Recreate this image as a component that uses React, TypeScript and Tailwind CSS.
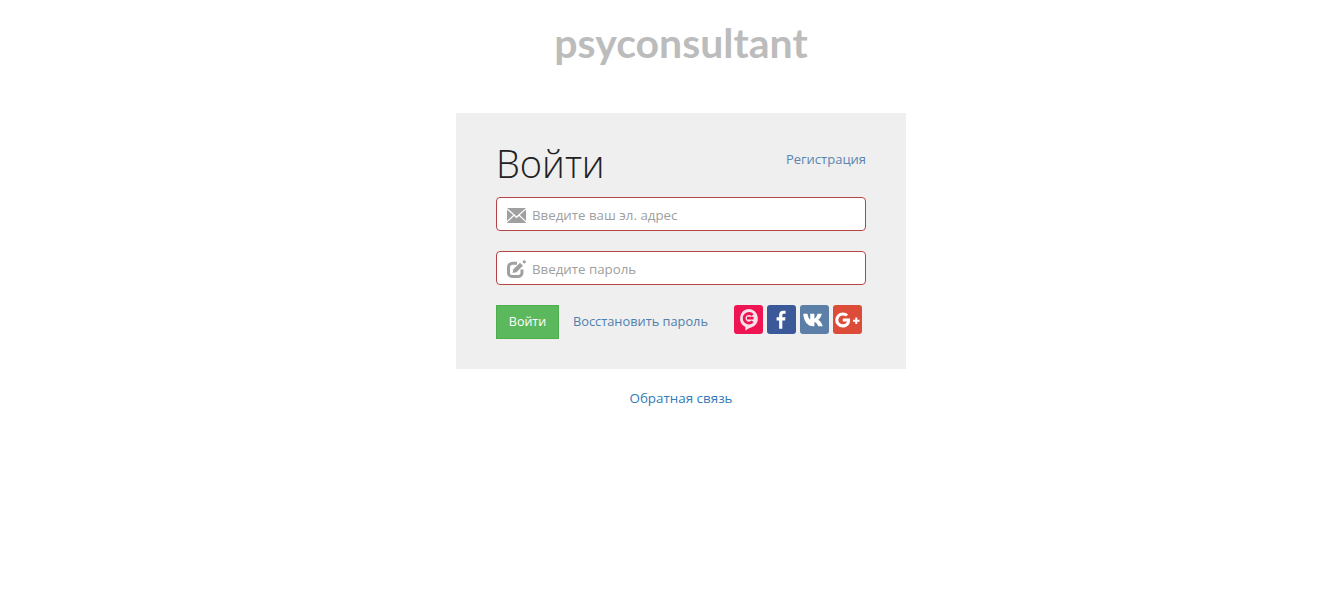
import React from 'react';

const MailIcon = () => (
  <svg width="19" height="15" viewBox="0 0 19 15" className="shrink-0">
    <path d="M0 0h19L9.5 8.200z" fill="#a0a0a0" />
    <path d="M0 1.500v11.500L6.200 7zM19 1.500v11.500L12.800 7z" fill="#a0a0a0" />
    <path d="M0 15v-.4L7 8l2.500 2.200L12 8l7 6.600v.4z" fill="#a0a0a0" />
  </svg>
);

const EditIcon = () => (
  <svg width="19" height="18" viewBox="0 0 19 18" className="shrink-0">
    <path d="M10 3.200H5.500a4 4 0 0 0-4 4v5.800a3.500 3.500 0 0 0 3.500 3.500h6a4 4 0 0 0 4-4V9.500" fill="none" stroke="#a0a0a0" strokeWidth="3" />
    <path d="M5.600 13l.8-3.700L13 2.800l3 2.900-6.600 6.600z" fill="#a0a0a0" />
    <circle cx="17.300" cy="1.800" r="1.600" fill="#a0a0a0" />
  </svg>
);

const Field = ({ icon, placeholder }: { icon: React.ReactNode; placeholder: string }) => (
  <div className="flex h-[34px] items-center rounded border border-[#b34444] bg-white pl-[10px]">
    <span className="flex w-[25px] shrink-0 items-center pt-[2px]">{icon}</span>
    <span className="pt-[1px] text-[13.3px] leading-[20px] text-[#a0a0a0]">{placeholder}</span>
  </div>
);

const Social = ({ bg, children }: { bg: string; children: React.ReactNode }) => (
  <a className={`flex h-[29px] w-[29px] items-center justify-center rounded-[3px] ${bg}`}>{children}</a>
);

const App: React.FC = () => {
  return (
    <div className="min-h-screen bg-white pl-5 font-['Open_Sans',sans-serif]">
      <div className="pt-[20px] text-center">
        <div className="font-['Lato',sans-serif] text-[41px] leading-[46px] font-bold text-[#bcbcbc]">psyconsultant</div>
      </div>

      <div className="mx-auto mt-[47px] w-[450px] bg-[#efefef] px-10 pt-[24px] pb-[30px]">
        <div className="flex h-[60px] items-start justify-between">
          <h1 className="text-[38px] leading-[52px] font-light text-[#222]">Войти</h1>
          <a className="mt-[12px] text-[13px] leading-[20px] text-[#5b84b1]">Регистрация</a>
        </div>

        <div className="flex flex-col gap-5">
          <Field icon={<MailIcon />} placeholder="Введите ваш эл. адрес" />
          <Field icon={<EditIcon />} placeholder="Введите пароль" />
        </div>

        <div className="mt-5 flex items-start">
          <button className="h-[34px] w-[63px] border border-[#4cae4c] bg-[#5cb85c] text-[12.5px] text-white">Войти</button>
          <a className="ml-[14px] self-center text-[12.8px] text-[#4f7fae]">Восстановить пароль</a>
          <div className="ml-auto mr-[4px] flex gap-1">
            <Social bg="bg-[#ef1553]">
              <svg width="21" height="23" viewBox="0 0 21 23">
                <path d="M10.500 1a9.500 9.500 0 0 1 2.600 18.600c-1.700.5-4.200 2-5.600 3.100l-.2-3.800A9.500 9.500 0 0 1 10.500 1z" fill="#fbe1e9" />
                <path d="M14.600 7.200a4.800 4.800 0 1 0 0 6.200M9 10.200h6.500" fill="none" stroke="#ef1553" strokeWidth="2.800" />
              </svg>
            </Social>
            <Social bg="bg-[#3b5998]">
              <svg width="11" height="19" viewBox="0 0 12 20">
                <path d="M3.400 20v-9H.6V7.500h2.800V5c0-3 1.800-4.600 4.400-4.600 1.300 0 2.300.1 2.600.1v3.100H8.600C7.200 3.600 6.900 4.300 6.900 5.300v2.200h3.500l-.5 3.500h-3v9z" fill="#fff" />
              </svg>
            </Social>
            <Social bg="bg-[#5b7fa6]">
              <svg width="23" height="14" viewBox="0 0 21 13">
                <path d="M0 .6h4c.3 2.300 1.300 4.600 2.500 5.400V.6h3.900v4.800c1.300-.7 2.400-2.800 3-4.800h3.900c-.5 2.500-2 4.600-3.300 5.700 1.500.9 3.200 2.900 4.200 5.900h-4.200c-.7-1.900-2.100-3.500-3.600-3.800v3.800H9.200C4.200 12.200.5 7.800 0 .6z" fill="#fff" />
              </svg>
            </Social>
            <Social bg="bg-[#dd4b39]">
              <svg width="26" height="16" viewBox="0 0 25 15">
                <path d="M7.500 6v3h4c-.3 1.500-1.700 2.700-4 2.700a4.300 4.300 0 0 1 0-8.600c1.200 0 2.200.4 3 1.100l2.100-2.100A7 7 0 0 0 7.500.2a7.300 7.300 0 0 0 0 14.600c4.200 0 7-2.900 7-7 0-.6 0-1.200-.1-1.800z" fill="#fff" />
                <path d="M19.500 5.200v2.100h-2.200v1.900h2.200v2.100h1.900V9.200h2.200V7.300h-2.200V5.200z" fill="#fff" />
              </svg>
            </Social>
          </div>
        </div>
      </div>

      <div className="mt-[18px] text-center leading-[20px]">
        <a className="text-[13.4px] text-[#337ab7]">Обратная связь</a>
      </div>
    </div>
  );
};

export default App;
